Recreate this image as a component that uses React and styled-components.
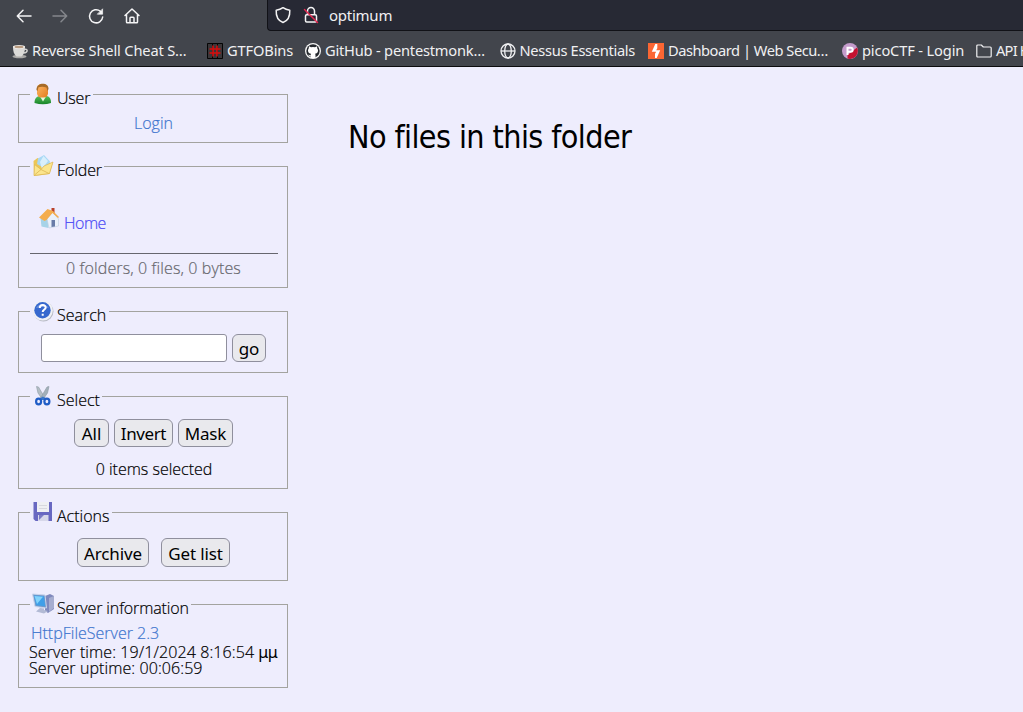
import React from "react";
import styled, { createGlobalStyle } from "styled-components";

const Global = createGlobalStyle`
  * { box-sizing: border-box; }
  body { margin: 0; background: #eeedfd; overflow: hidden; }
`;

const Window = styled.div`
  width: 1023px;
  height: 712px;
  overflow: hidden;
  background: #eeedfd;
  font-family: "Open Sans", "Noto Sans", sans-serif;
  color: #000;
`;

const Browser = styled.header`
  height: 67px;
  background: #42454c;
  border-bottom: 1px solid #0c0c0e;
  color: #f0f0f2;
  font-family: "Noto Sans", sans-serif;
`;

const NavBar = styled.div`
  display: flex;
  height: 31px;
`;

const NavButtons = styled.div`
  display: flex;
  width: 267px;
  padding: 7px 0 0 15px;
  gap: 18px;
`;

const AddressBar = styled.div`
  flex: 1;
  display: flex;
  align-items: flex-start;
  height: 31px;
  padding: 6px 0 0 6px;
  background: #272934;
  border: 1px solid #111217;
  border-width: 0 0 1px 1px;
  border-radius: 0 0 0 4px;
`;

const Address = styled.span`
  margin-left: 9px;
  font-size: 15px;
  line-height: 18px;
  letter-spacing: -0.25px;
`;

const LockSlot = styled.span`
  display: flex;
  margin-left: 10px;
`;

const Bookmarks = styled.nav`
  display: flex;
  height: 35px;
  padding-left: 12px;
  overflow: hidden;
`;

const Bookmark = styled.span`
  display: flex;
  flex: none;
  align-items: center;
  gap: 4px;
  width: ${(p) => p.$width}px;
  height: 40px;
  white-space: nowrap;
  font-size: 14.67px;
  letter-spacing: ${(p) => p.$spacing || 0}px;
  svg { flex: none; }
`;

const BookmarkLabel = styled.span`
  padding-bottom: 2px;
`;

const Page = styled.main`
  display: flex;
  height: 645px;
`;

const Sidebar = styled.aside`
  display: flex;
  flex-direction: column;
  gap: 12px;
  width: 270px;
  margin: 16px 0 0 18px;
`;

const Panel = styled.fieldset`
  flex: none;
  min-width: 0;
  width: 270px;
  height: ${(p) => p.$height}px;
  margin: 0;
  padding: 0 9px 0 11px;
  border: 1px solid #a3a39f;
  font-size: 16px;
  font-weight: 300;
  -webkit-text-stroke-width: 0.2px;
`;

const Legend = styled.legend`
  display: flex;
  gap: 3.5px;
  height: 23px;
  padding: 0 2.5px 0 1.5px;
  white-space: nowrap;
  svg { flex: none; }
`;

const LegendText = styled.span`
  padding-top: 4px;
  line-height: 23px;
  height: 23px;
  letter-spacing: ${(p) => p.$spacing || 0}px;
`;

const Line = styled.div`
  margin-top: ${(p) => p.$top || 0}px;
  margin-left: ${(p) => p.$left || 0}px;
  height: ${(p) => p.$height || 20}px;
  line-height: ${(p) => p.$height || 20}px;
  text-align: ${(p) => p.$align || "center"};
  white-space: nowrap;
  color: ${(p) => p.$color || "#000"};
  letter-spacing: ${(p) => p.$spacing || 0}px;
`;

const HomeRow = styled.div`
  display: flex;
  gap: 4px;
  height: 45px;
  margin-top: 30px;
  padding-left: 9px;
`;

const HomeLabel = styled.a`
  margin-top: 5px;
  line-height: 20px;
  color: #4b49f5;
  letter-spacing: -0.5px;
`;

const Rule = styled.div`
  height: 1px;
  background: #66666e;
`;

const Controls = styled.div`
  display: flex;
  justify-content: center;
  gap: ${(p) => p.$gap || 5}px;
  margin-top: ${(p) => p.$top}px;
  padding-right: ${(p) => p.$shift || 0}px;
`;

const SearchInput = styled.input`
  width: 186px;
  height: 28px;
  border: 1px solid #8f8f9d;
  border-radius: 3px;
  background: #fff;
`;

const Button = styled.button`
  width: ${(p) => p.$width}px;
  height: ${(p) => p.$height || 28}px;
  padding: 2px 0 0 1px;
  border: 1px solid #8f8f9d;
  border-radius: 6px;
  background: #e9e9ed;
  color: #000;
  font: 400 17px/24px "Noto Sans", sans-serif;
  letter-spacing: ${(p) => p.$spacing || 0}px;
  white-space: nowrap;
  -webkit-text-stroke-width: 0;
`;

const Micro = styled.span`
  font-family: "Noto Sans", sans-serif;
  font-weight: 400;
  letter-spacing: -0.6px;
  -webkit-text-stroke-width: 0;
`;

const Message = styled.h1`
  margin: 50px 0 0 60px;
  font: 400 32px/40px "DejaVu Sans Condensed", "DejaVu Sans", sans-serif;
  font-stretch: condensed;
  letter-spacing: -0.59px;
  white-space: nowrap;
`;

const Stroke = ({ size = 18, children, color = "#f4f4f5", width = 1.5 }) => (
  <svg width={size} height={size} viewBox="0 0 18 18" fill="none" stroke={color} strokeWidth={width} strokeLinecap="round" strokeLinejoin="round">
    {children}
  </svg>
);

const BackIcon = () => <Stroke><path d="M16 9H2.5M8 3.3 2.3 9 8 14.7" /></Stroke>;
const ForwardIcon = () => <Stroke color="#85878c"><path d="M2 9h13.5M10 3.3 15.7 9 10 14.7" /></Stroke>;
const ReloadIcon = () => (
  <Stroke>
    <path d="M15.7 10a6.600 6.600 0 1 1-2.300-5.800l1 .9" />
    <path d="M15.600 2.200v5h-5z" fill="#f4f4f5" strokeWidth=".7" />
  </Stroke>
);
const HomeOutlineIcon = () => <Stroke><path d="M2 8.500 9 2l7 6.500M3.500 7.500V15q0 .8.8.8h9.400q.8 0 .8-.8V7.500M7 15.500V11q0-.8.8-.8h2.400q.8 0 .8.8v4.500" /></Stroke>;
const ShieldIcon = () => <Stroke><path d="M9 1.700C7 3.200 4.500 4 2.200 4.200c-.3 5.800 1.300 10.200 6.800 12.300C14.500 14.400 16.100 10 15.800 4.200 13.500 4 11 3.200 9 1.700z" /></Stroke>;
const LockIcon = () => (
  <Stroke>
    <path d="M3.500 10q0-1.200 1.200-1.200h8.600q1.200 0 1.200 1.200v4.700q0 1.200-1.200 1.200H4.700q-1.200 0-1.200-1.200zM5.500 8.500V5A3.500 3.500 0 0 1 12.500 5V8.500" />
    <path d="m2.500 3.500 13 13" stroke="#e22850" />
  </Stroke>
);

const CupIcon = () => (
  <svg width="16" height="16" viewBox="0 0 16 16">
    <ellipse cx="7.500" cy="13.500" rx="7" ry="1.800" fill="#aaa9a7" />
    <path d="M12 6.500c4-1.500 4.500 3-.5 3.500" fill="none" stroke="#d2d1cf" strokeWidth="1.500" />
    <path d="M1 3.500h12c0 5-1 8-3.500 10h-5C2 11.500 1 8.500 1 3.500z" fill="#dbdad8" />
    <ellipse cx="7" cy="3.800" rx="6" ry="1.900" fill="#f5f2ed" />
    <ellipse cx="7" cy="4" rx="4.600" ry="1.200" fill="#b79a80" />
  </svg>
);
const GridIcon = () => (
  <svg width="16" height="16" viewBox="0 0 16 16">
    <path fill="#3a3639" d="M0 0h16v16H0z" />
    <path d="M.5.5h15v15H.5zM5.500 0v16M10.500 0v16" stroke="#050505" fill="none" />
    <path d="M6 2.500v11M10 2.500v11M2.500 6h11M2.500 10h11" stroke="#d70f0f" strokeWidth="1.600" />
  </svg>
);
const GithubIcon = () => (
  <svg width="16" height="16" viewBox="0 0 16 16">
    <circle cx="8" cy="8" r="8" fill="#f7f7f7" />
    <circle cx="8" cy="8" r="6.700" fill="#25292e" />
    <path fill="#fff" d="M4 3.300 6 4.200q2-.5 4 0l2-.9.300 2.200q1 1 .7 2.500c-.3 2-1.500 2.500-3 2.800q.6.600.5 2v2.200h-5v-1.800c-1.500.3-1.800-.7-2.300-1.500 1.200-.1 1.200 1 2.400.6l.4-1.500C4.500 10.500 3.300 10 3 8q-.2-1.500.7-2.500z" />
  </svg>
);
const GlobeIcon = () => (
  <svg width="16" height="16" viewBox="0 0 16 16" fill="none" stroke="#f0f0f2" strokeWidth="1.300">
    <circle cx="8" cy="8" r="7" /><ellipse cx="8" cy="8" rx="3.300" ry="7" /><path d="M1 8h14" />
  </svg>
);
const BoltIcon = () => (
  <svg width="16" height="16" viewBox="0 0 16 16">
    <path fill="#fb6633" d="M0 0h16v16H0z" />
    <path fill="#fff" d="M7.300 1h2v4.200L8.200 7.200h4L8.700 15H7v-4.300l1.200-2H3.800z" />
  </svg>
);
const PicoIcon = () => (
  <svg width="16" height="16" viewBox="0 0 16 16">
    <circle cx="8" cy="8" r="8" fill="#c49bcb" />
    <path d="M15 4.500A8 8 0 0 1 5.500 15.600V12z" fill="#c51230" />
    <path d="M5.500 12V4.700h3.200q2 0 2 2t-2 2H6" fill="none" stroke="#fff" strokeWidth="2" />
  </svg>
);
const BookmarkFolderIcon = () => (
  <svg width="16" height="16" viewBox="0 0 16 16" fill="none" stroke="#f0f0f2" strokeWidth="1.200" strokeLinejoin="round">
    <path d="M.8 3q0-1 1-1h3.500l2 2h6.900q1 0 1 1v8q0 1-1 1H1.800q-1 0-1-1z" />
  </svg>
);

const Art = ({ children }) => <svg width="22" height="22" viewBox="0 0 22 22">{children}</svg>;

const UserIcon = () => (
  <Art>
    <defs>
      <linearGradient id="coat" x2="0" y2="1"><stop stopColor="#57bd58" /><stop offset="1" stopColor="#168429" /></linearGradient>
      <linearGradient id="face" x2="1" y2="1"><stop stopColor="#ffb967" /><stop offset="1" stopColor="#e37b1e" /></linearGradient>
    </defs>
    <path d="M2.500 20c0-4 1.500-6.500 5-7h7c3.500.5 4.500 3 4.500 7q-8 2.500-16.500 0z" fill="url(#coat)" />
    <path d="m8 13.500 3 5 3-5z" fill="#e9f8df" />
    <rect x="5" y="1" width="11" height="13.500" rx="4.200" fill="url(#face)" />
    <path d="M4.500 7C4-.8 16.800-1.500 16.500 6l-1 2-1-3.500q-4-1.200-8-.2L5.500 8z" fill="#a66b28" />
  </Art>
);
const FolderIcon = () => (
  <Art>
    <path d="m1.500 6 4-3 2.500 1 12.500 5-3 10-15.500 2z" fill="#ecc657" />
    <path d="M5 9 6 3.500 12 0l6 6.500-2 9z" fill="#a9d8f5" />
    <path d="m8 7 3.500-6 4.500 5-6 8z" fill="#d8effc" />
    <path d="m2 20.500.5-11 6.500 5 3-3.500 9-4-3.500 11.500z" fill="#fbe58d" stroke="#dbb553" strokeWidth=".7" />
    <path d="m2.500 20 6.500-5.500 8 4" fill="none" stroke="#dbb553" strokeWidth=".8" />
  </Art>
);
const HomeIcon = () => (
  <svg width="21" height="21" viewBox="0 0 21 21">
    <path d="M12.500 0h3v7h-3z" fill="#b94028" />
    <path d="m1.500 10 8 1v9l-7-1.500z" fill="#a6d3e8" />
    <path d="m8 11 5.500-7 6 7v7l-9.500 2z" fill="#eaf1fb" stroke="#bccbe0" strokeWidth=".6" />
    <path d="M0 9.500 8.500 1l5.500 2 6 6-1 1-5.500-5L7.500 12 5.500 13z" fill="#f4ad4d" />
    <path d="M12.500 12h3.500v6.500l-3.500.6z" fill="#687ca8" />
  </svg>
);
const HelpIcon = () => (
  <Art>
    <circle cx="11.500" cy="11.500" r="10" fill="#b7bac4" />
    <circle cx="10.800" cy="10.600" r="10" fill="#f0f1f5" />
    <circle cx="10.500" cy="10.300" r="8.200" fill="#3769ce" />
    <path d="M4 8q6-8 13 0-6-2-13 0z" fill="#7195df" />
    <path d="M7.700 8c.3-4 6-3.600 6-.5 0 2-3 2-3 4.500M10.700 13.800v2" fill="none" stroke="#fff" strokeWidth="2" />
  </Art>
);
const ScissorsIcon = () => (
  <Art>
    <path d="m4.500 1.500 2 .5 6.500 11-2.500 1.500L6 8z" fill="#b4bec5" stroke="#8b98a3" strokeWidth=".6" />
    <path d="m17 1.500-2 .5L8.500 13l2.500 1.500L15.500 8z" fill="#a2b0b9" stroke="#8b98a3" strokeWidth=".6" />
    <path d="m8.500 13 2.300-1.500 2.500 1.500-.7 2h-3.500z" fill="#3975c8" />
    <ellipse cx="6.600" cy="16.500" rx="2.500" ry="2.800" fill="none" stroke="#205dc6" strokeWidth="2.200" />
    <ellipse cx="14.900" cy="16.500" rx="2.500" ry="2.800" fill="none" stroke="#205dc6" strokeWidth="2.200" />
  </Art>
);
const DiskIcon = () => (
  <Art>
    <path d="M1.500 1H20v19H3.500l-2-2z" fill="#6868c1" />
    <path d="M5 1h12v10H5z" fill="#eff0f3" />
    <path d="M7 4.500h8M7 7.500h8" stroke="#d8d9df" />
    <path d="M6 14h10.500v6H6z" fill="#d7d8ea" />
    <path d="M7 14h5l-5 5z" fill="#7a7ac5" />
  </Art>
);
const ServerIcon = () => (
  <Art>
    <path d="m13 3 5-2 4 2v13l-6 4-3-2z" fill="#7f89bd" />
    <path d="m17 5 5-2v12l-5 4z" fill="#a5add0" />
    <path d="M.5 1 13 2l1.500 13-11.500-1.500z" fill="#7498c9" stroke="#c8d5ec" />
    <path d="m2 2.500 10 .8 1.200 10-9-1z" fill="#3f9fe8" />
    <path d="m2.500 3 8.500.7L5 11z" fill="#83d3fb" />
    <path d="m8 15 4 .5v1.500l4 1-4 2.500-8-2z" fill="#b2bad5" />
  </Art>
);

const LINK = "#3e75ce";

function Section({ icon, title, height, spacing, children }) {
  return (
    <Panel $height={height}>
      <Legend>{icon}<LegendText $spacing={spacing}>{title}</LegendText></Legend>
      {children}
    </Panel>
  );
}

const BOOKMARKS = [
  { width: 195, spacing: -0.17, Icon: CupIcon, label: "Reverse Shell Cheat S…" },
  { width: 98, spacing: -0.15, Icon: GridIcon, label: "GTFOBins" },
  { width: 194.5, spacing: -0.21, Icon: GithubIcon, label: "GitHub - pentestmonk…" },
  { width: 148.5, spacing: -0.32, Icon: GlobeIcon, label: "Nessus Essentials" },
  { width: 194, spacing: -0.48, Icon: BoltIcon, label: "Dashboard | Web Secu…" },
  { width: 134, spacing: -0.15, Icon: PicoIcon, label: "picoCTF - Login" },
  { width: 60, spacing: -0.8, Icon: BookmarkFolderIcon, label: "API H" },
];

export default function App() {
  return (
    <Window>
      <Global />
      <Browser>
        <NavBar>
          <NavButtons><BackIcon /><ForwardIcon /><ReloadIcon /><HomeOutlineIcon /></NavButtons>
          <AddressBar><ShieldIcon /><LockSlot><LockIcon /></LockSlot><Address>optimum</Address></AddressBar>
        </NavBar>
        <Bookmarks>
          {BOOKMARKS.map(({ width, spacing, Icon, label }) => (
            <Bookmark key={label} $width={width} $spacing={spacing}>
              <Icon /><BookmarkLabel>{label}</BookmarkLabel>
            </Bookmark>
          ))}
        </Bookmarks>
      </Browser>
      <Page>
        <Sidebar>
          <Section icon={<UserIcon />} title="User" height={60} spacing={-0.2}>
            <Line $top={7} $left={-1} $color={LINK}>Login</Line>
          </Section>
          <Section icon={<FolderIcon />} title="Folder" height={133} spacing={-0.1}>
            <HomeRow><HomeIcon /><HomeLabel>Home</HomeLabel></HomeRow>
            <Rule />
            <Line $top={4} $left={-1} $spacing={0.12} $color="#68686e">0 folders, 0 files, 0 bytes</Line>
          </Section>
          <Section icon={<HelpIcon />} title="Search" height={73}>
            <Controls $top={11} $shift={2}>
              <SearchInput aria-label="Search" />
              <Button $width={34} $spacing={-0.2}>go</Button>
            </Controls>
          </Section>
          <Section icon={<ScissorsIcon />} title="Select" height={104}>
            <Controls $top={11} $shift={2}>
              <Button $width={35}>All</Button>
              <Button $width={59} $spacing={-0.4}>Invert</Button>
              <Button $width={55} $spacing={-0.2}>Mask</Button>
            </Controls>
            <Line $top={12}>0 items selected</Line>
          </Section>
          <Section icon={<DiskIcon />} title="Actions" height={80}>
            <Controls $top={14} $gap={12} $shift={2}>
              <Button $width={72} $height={29} $spacing={-0.15}>Archive</Button>
              <Button $width={69} $height={29} $spacing={-0.15}>Get list</Button>
            </Controls>
          </Section>
          <Section icon={<ServerIcon />} title="Server information" height={95} spacing={-0.13}>
            <Line $top={7} $left={1} $align="left" $color={LINK}>HttpFileServer 2.3</Line>
            <Line $top={1} $left={-1} $height={16} $spacing={0.09} $align="left">Server time: 19/1/2024 8:16:54 <Micro>μμ</Micro></Line>
            <Line $left={-1} $height={16} $spacing={0.09} $align="left">Server uptime: 00:06:59</Line>
          </Section>
        </Sidebar>
        <Message>No files in this folder</Message>
      </Page>
    </Window>
  );
}
